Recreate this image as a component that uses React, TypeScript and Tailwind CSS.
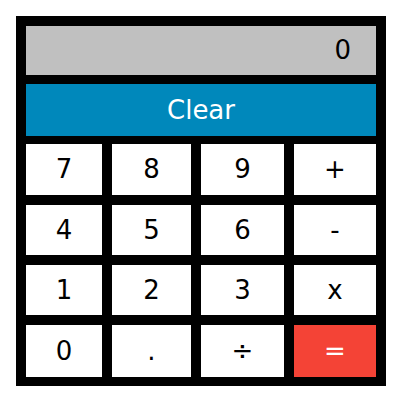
import React from 'react';

const keys: { label: string; red?: boolean }[] = [
  { label: '7' }, { label: '8' }, { label: '9' }, { label: '+' },
  { label: '4' }, { label: '5' }, { label: '6' }, { label: '-' },
  { label: '1' }, { label: '2' }, { label: '3' }, { label: 'x' },
  { label: '0' }, { label: '.' }, { label: '÷' }, { label: '=', red: true },
];

export default function App() {
  return (
    <div className="w-[400px] h-[400px] bg-white pt-4 pl-4 font-['DejaVu_Sans',sans-serif]">
      <div className="w-[370px] bg-black p-[10px] pb-[9px] flex flex-col">
        <div className="h-[49px] bg-[#c0c0c0] flex items-center justify-end pr-[25px] text-[26px] text-black">
          0
        </div>
        <button className="mt-[9px] h-[52px] bg-[#0088bb] text-white text-[26px] flex items-center justify-center">
          Clear
        </button>
        <div className="mt-[8px] grid grid-cols-[76px_79px_83px_82px] grid-rows-[51px_50px_50px_52px] gap-[10px]">
          {keys.map((k) => (
            <button
              key={k.label}
              className={
                k.red
                  ? 'bg-[#f44336] text-white text-[26px] flex items-center justify-center'
                  : 'bg-white text-black text-[26px] flex items-center justify-center'
              }
            >
              {k.label}
            </button>
          ))}
        </div>
      </div>
    </div>
  );
}
